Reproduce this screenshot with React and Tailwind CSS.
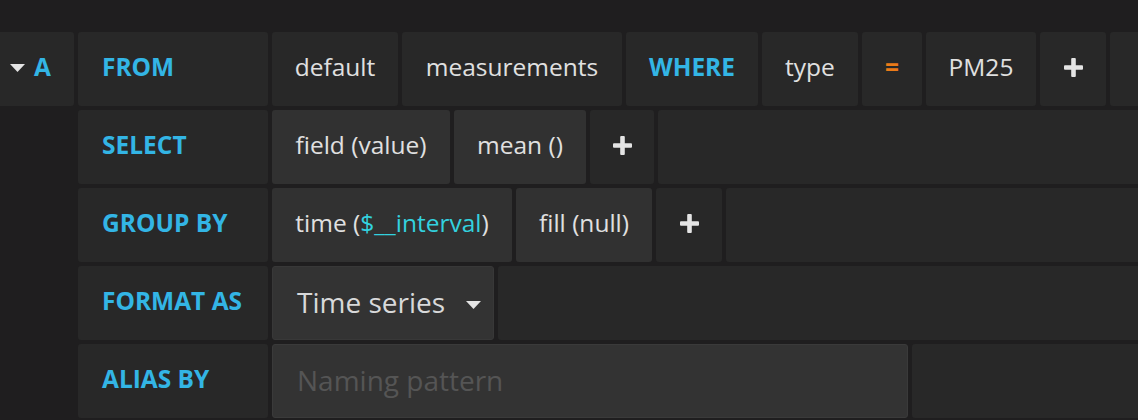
import React from 'react';

const Plus = () => (
    <svg width="19" height="19" viewBox="0 0 19 19">
        <rect x="7.2" y="0" width="4.6" height="19" rx="1" fill="#e4e4e4" />
        <rect x="0" y="7.2" width="19" height="4.6" rx="1" fill="#e4e4e4" />
    </svg>
);

const Caret = () => (
    <svg width="15" height="8" viewBox="0 0 15 8">
        <path d="M0 0 L15 0 L7.5 8 Z" fill="#e4e4e4" />
    </svg>
);

function Label({ children }) {
    return (
        <div className="w-[190px] shrink-0 h-full flex items-center pl-6 pb-[3px] bg-[#282828] rounded-[3px] text-[24.5px] font-bold text-[#33b5e5]">
            {children}
        </div>
    );
}

function Seg({ w, light, children }) {
    return (
        <div className={`${w} shrink-0 h-full flex items-center justify-center pb-[3px] rounded-[3px] text-[24.5px] text-[#e0e0e0] ${light ? 'bg-[#313131]' : 'bg-[#282828]'}`}>
            {children}
        </div>
    );
}

const Filler = () => <div className="flex-1 h-full bg-[#282828] rounded-l-[3px]" />;

function Row({ children, first }) {
    return (
        <div className="flex gap-1 h-[74px]">
            {first ? (
                <div className="w-[74px] shrink-0 h-full bg-[#282828] rounded-r-[3px] flex items-center pl-[10px] gap-[9px] pb-[3px]">
                    <Caret />
                    <span className="text-[24.5px] font-bold text-[#33b5e5]">A</span>
                </div>
            ) : (
                <div className="w-[74px] shrink-0" />
            )}
            {children}
        </div>
    );
}

export default function App() {
    return (
        <div className="w-[1138px] h-[420px] overflow-hidden bg-[#1f1e1f] pt-8 flex flex-col gap-1" style={{ fontFamily: '"Open Sans", "Noto Sans", sans-serif' }}>
            <Row first>
                <Label>FROM</Label>
                <Seg w="w-[126px]">default</Seg>
                <Seg w="w-[220px]">measurements</Seg>
                <Seg w="w-[132px]"><span className="font-bold text-[#33b5e5]">WHERE</span></Seg>
                <Seg w="w-[96px]">type</Seg>
                <Seg w="w-[60px]"><span className="font-bold text-[#eb7b18]">=</span></Seg>
                <Seg w="w-[110px]">PM25</Seg>
                <Seg w="w-[66px]"><Plus /></Seg>
                <Filler />
            </Row>
            <Row>
                <Label>SELECT</Label>
                <Seg w="w-[178px]" light>field (value)</Seg>
                <Seg w="w-[132px]" light>mean ()</Seg>
                <Seg w="w-[64px]"><Plus /></Seg>
                <Filler />
            </Row>
            <Row>
                <Label>GROUP BY</Label>
                <Seg w="w-[240px]" light>
                    <span>time (<span className="text-[#33d1df]">$__interval</span>)</span>
                </Seg>
                <Seg w="w-[136px]" light>fill (null)</Seg>
                <Seg w="w-[66px]"><Plus /></Seg>
                <Filler />
            </Row>
            <Row>
                <Label>FORMAT AS</Label>
                <div className="w-[222px] shrink-0 h-full flex items-center pl-6 pr-3 pb-[3px] bg-[#333333] border border-[#383838] rounded-[3px] text-[28px] text-[#d8d9da]">
                    <span className="flex-1">Time series</span>
                    <span className="pt-[6px]"><Caret /></span>
                </div>
                <Filler />
            </Row>
            <Row>
                <Label>ALIAS BY</Label>
                <div className="w-[636px] shrink-0 h-full flex items-center pl-6 pb-[3px] bg-[#333333] border border-[#3a3a3a] rounded-[3px] text-[28px] text-[#555555]">
                    Naming pattern
                </div>
                <Filler />
            </Row>
        </div>
    );
}
